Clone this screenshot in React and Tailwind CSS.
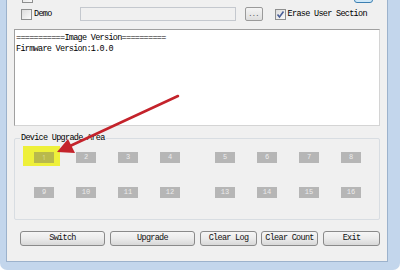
const mono = { fontFamily: '"Liberation Mono", "DejaVu Sans Mono", monospace' };

function CheckBox({ checked }) {
    return (
        <span className="w-[11px] h-[11px] border border-[#8e8f8f] bg-gradient-to-br from-[#dcdcdc] to-[#fafafa] flex items-center justify-center shrink-0">
            {checked && (
                <svg width="9" height="9" viewBox="0 0 9 9">
                    <path d="M1.5 4.5 L3.5 7 L7.5 1.5" stroke="#4a5f97" strokeWidth="1.6" fill="none" />
                </svg>
            )}
        </span>
    );
}

function Tile({ n, active }) {
    return (
        <div
            className={
                "w-[20px] h-[11px] flex items-center justify-center text-[7px] leading-none " +
                (active ? "bg-[#b5b54c] text-[#d6d68a]" : "bg-[#b6b6b6] text-[#ececec]")
            }
        >
            {n}
        </div>
    );
}

function WinButton({ label, w }) {
    return (
        <button
            className={
                "h-[15px] border border-[#8a8a8a] rounded-[3px] bg-gradient-to-b from-[#f6f6f6] via-[#ebebeb] to-[#d8d8d8] text-[8.5px] tracking-[-0.7px] text-[#111] flex items-center justify-center " +
                w
            }
            style={mono}
        >
            {label}
        </button>
    );
}

export default function App() {
    const row1 = [1, 2, 3, 4];
    const row1b = [5, 6, 7, 8];
    const row2 = [9, 10, 11, 12];
    const row2b = [13, 14, 15, 16];

    return (
        <div className="w-[400px] h-[270px] relative overflow-hidden bg-[#c3d6ec] flex pl-[6px] pr-[12px] pb-[8px] rounded-bl-[7px] rounded-br-[7px]">
            <div className="flex-1 bg-[#f0f0f0] border-x border-b border-[#9cb2cc] flex flex-col px-[7px] text-black" style={mono}>
                {/* partly hidden row at the top */}
                <div className="h-[15px] -mt-[12px] flex items-end relative">
                    <span className="ml-[8px]"><CheckBox /></span>
                    <div className="ml-auto mr-[7px] w-[19px] h-[15px] border border-[#3c7fb1] rounded-[3px] bg-[#cfe8f8]" />
                </div>

                {/* demo row */}
                <div className="h-[14px] mt-[4px] flex items-center text-[8.5px] tracking-[-0.7px]">
                    <span className="ml-[7px]"><CheckBox /></span>
                    <span className="ml-[2px]">Demo</span>
                    <div className="ml-[28px] w-[156px] h-[14px] border border-[#c4c8ce] bg-[#f0f0f0]" />
                    <div className="ml-[9px] w-[18px] h-[14px] border border-[#9a9a9a] rounded-[2px] bg-gradient-to-b from-[#f4f4f4] to-[#dedede] flex items-center justify-center text-[7px] text-[#555]">...</div>
                    <span className="ml-[12px]"><CheckBox checked /></span>
                    <span className="ml-[2px]">Erase User Section</span>
                </div>

                {/* log box */}
                <div className="mt-[8px] h-[97px] bg-white border border-[#a0a0a0] border-r-[#d4d4d4] border-b-[#d4d4d4] px-[1px] pt-[3px] text-[8.5px] tracking-[-0.7px] leading-[11px]">
                    <div>===========Image Version==========</div>
                    <div>Firmware Version:1.0.0</div>
                </div>

                {/* group box */}
                <div className="mt-[12px] h-[82px] border border-[#d8dde2] rounded-[2px] relative">
                    <span className="absolute -top-[5px] left-[5px] bg-[#f0f0f0] px-[1px] text-[8.5px] tracking-[-0.7px] leading-[9px]">
                        Device Upgrade Area
                    </span>
                    <div className="pl-[19px] pt-[13px] flex flex-col gap-[24px]">
                        <div className="flex gap-[35px]">
                            <div className="flex gap-[22px]">
                                {row1.map(n => <Tile key={n} n={n} active={n === 1} />)}
                            </div>
                            <div className="flex gap-[22px]">
                                {row1b.map(n => <Tile key={n} n={n} />)}
                            </div>
                        </div>
                        <div className="flex gap-[35px]">
                            <div className="flex gap-[22px]">
                                {row2.map(n => <Tile key={n} n={n} />)}
                            </div>
                            <div className="flex gap-[22px]">
                                {row2b.map(n => <Tile key={n} n={n} />)}
                            </div>
                        </div>
                    </div>
                </div>

                {/* buttons */}
                <div className="mt-[11px] ml-[6px] flex">
                    <WinButton label="Switch" w="w-[85px]" />
                    <span className="w-[5px]" />
                    <WinButton label="Upgrade" w="w-[85px]" />
                    <span className="w-[5px]" />
                    <WinButton label="Clear Log" w="w-[57px]" />
                    <span className="w-[4px]" />
                    <WinButton label="Clear Count" w="w-[57px]" />
                    <span className="w-[5px]" />
                    <WinButton label="Exit" w="w-[57px]" />
                </div>
            </div>

            {/* yellow highlight on the first tile */}
            <div className="absolute left-[23px] top-[146px] w-[37px] h-[20px] bg-[#eef03a] pointer-events-none flex items-start pl-[11px] pt-[6px]">
                <div className="w-[20px] h-[11px] bg-[#b9b94c] flex items-center justify-center text-[7px] leading-none text-[#d8d890]">1</div>
            </div>

            {/* red arrow */}
            <svg className="absolute left-0 top-0 pointer-events-none" width="400" height="270" viewBox="0 0 400 270">
                <line x1="178" y1="96" x2="70" y2="146" stroke="#c4232b" strokeWidth="2.5" strokeLinecap="round" />
                <polygon points="57,152 75,153 68,139" fill="#c4232b" />
            </svg>
        </div>
    );
}
